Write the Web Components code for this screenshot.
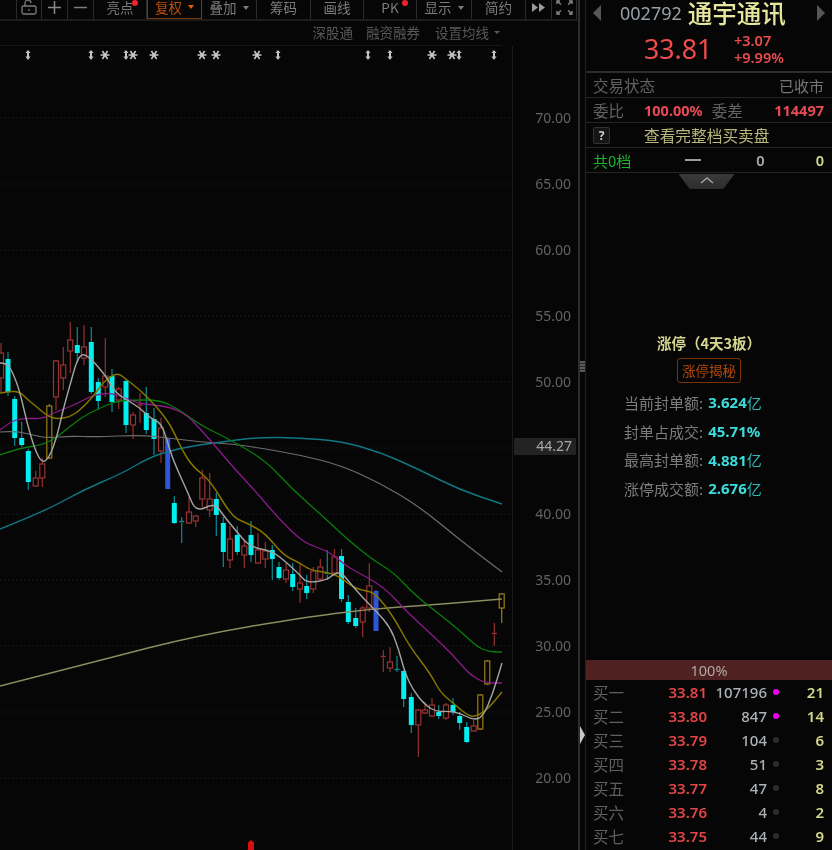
<!DOCTYPE html>
<html lang="zh">
<head>
<meta charset="utf-8">
<title>002792</title>
<style>
  html, body { margin: 0; height: 100%; background: #060606; overflow: hidden; }
  body { font-family: "Noto Sans", "Noto Sans CJK SC", sans-serif; }
</style>
</head>
<body>
<stock-app>
  <chart-pane slot="chart"></chart-pane>
  <quote-panel slot="panel"></quote-panel>
</stock-app>

<script>
const FONT = '"Noto Sans", "Noto Sans CJK SC", sans-serif';
const CJK = '"Noto Sans CJK SC", "Noto Sans", sans-serif';

// --- App Shell ---
class StockApp extends HTMLElement {
  constructor() {
    super();
    this.attachShadow({ mode: 'open' }).innerHTML = `
      <style>
        :host { display: flex; width: 832px; height: 850px; overflow: hidden; background: #060606; filter: blur(.3px); }
        .split { width: 8px; flex: none; box-sizing: border-box; border-left: 2px solid #2e2e2e; border-right: 1px solid #222;
                 display: flex; flex-direction: column; align-items: center; }
        .grip { width: 5px; height: 11px; margin-top: 361px; background: repeating-linear-gradient(#5a5a5a 0 2px, #2a2a2a 2px 3px); }
        .arrow { margin-top: 354px; width: 0; height: 0; border-left: 5px solid #c8c8c8; border-top: 9px solid transparent; border-bottom: 9px solid transparent; }
      </style>
      <slot name="chart"></slot>
      <div class="split"><div class="grip"></div><div class="arrow"></div></div>
      <slot name="panel"></slot>`;
  }
}

// --- Toolbar ---
class ToolBtn extends HTMLElement {
  constructor() {
    super();
    this.attachShadow({ mode: 'open' }).innerHTML = `
      <style>
        :host { display: flex; position: relative; align-items: center; justify-content: center; gap: 6px; box-sizing: border-box; height: 19px;
                padding-bottom: 5px; border-right: 1px solid #2c2c2c; color: #7c7c7c; font: 13.5px ${CJK}; white-space: nowrap; }
        :host([active]) { color: #b8500c; border: 1px solid #7a3a0c; border-top: 0; }
        .caret { display: none; width: 0; height: 0; border: 3px solid transparent; border-top: 4px solid currentColor; margin-top: 4px; }
        :host([menu]) .caret { display: block; }
        :host([active]) .caret { color: #e0600c; }
        .dot { display: none; position: absolute; right: 8px; top: 0; width: 6px; height: 6px; border-radius: 50%; background: #f0232e; }
        :host([dot]) .dot { display: block; }
      </style>
      <span><slot></slot></span><i class="caret"></i><i class="dot"></i>`;
  }
}

class ChartToolbar extends HTMLElement {
  constructor() {
    super();
    this.attachShadow({ mode: 'open' }).innerHTML = `
      <style>
        :host { display: grid; height: 21px; box-sizing: border-box; border-bottom: 2px solid #1c1c1c;
                grid-template-columns: 17px 25px 26px 26px 53px 55px 55px 54px 53px 53px 55px 54px 26px 25px; }
        .blank { border-right: 1px solid #2c2c2c; height: 19px; }
        svg { display: block; }
      </style>
      <div class="blank"></div>
      <tool-btn><svg width="18" height="15" viewBox="0 0 18 15" fill="none" stroke="#7c7c7c" stroke-width="1.3"><rect x="2" y="6" width="14" height="8" rx="1.5"/><path d="M5 6V3a3 3 0 0 1 6 0"/><path d="M9 9v2"/></svg></tool-btn>
      <tool-btn><svg width="13" height="13" viewBox="0 0 13 13" stroke="#8a8a8a" stroke-width="1.5"><path d="M0 6.5h13M6.5 0v13"/></svg></tool-btn>
      <tool-btn><svg width="13" height="13" viewBox="0 0 13 13" stroke="#7c7c7c" stroke-width="1.5"><path d="M0 6.5h13"/></svg></tool-btn>
      <tool-btn dot>亮点</tool-btn>
      <tool-btn active menu>复权</tool-btn>
      <tool-btn menu>叠加</tool-btn>
      <tool-btn>筹码</tool-btn>
      <tool-btn>画线</tool-btn>
      <tool-btn dot>PK</tool-btn>
      <tool-btn menu>显示</tool-btn>
      <tool-btn>简约</tool-btn>
      <tool-btn><svg width="13" height="9" viewBox="0 0 13 9" fill="#9a9a9a"><path d="M0 0l6 4.5L0 9zM7 0l6 4.5L7 9z"/></svg></tool-btn>
      <tool-btn><svg width="17" height="15" viewBox="0 0 17 15" fill="none" stroke="#8a8a8a" stroke-width="1.4"><path d="M1 4V1h3M16 4V1h-3M1 11v3h3M16 11v3h-3M2 2l3 2.5M15 2l-3 2.5M2 13l3-2.5M15 13l-3-2.5"/></svg></tool-btn>`;
  }
}

class ChartSubbar extends HTMLElement {
  constructor() {
    super();
    this.attachShadow({ mode: 'open' }).innerHTML = `
      <style>
        :host { display: flex; justify-content: flex-end; align-items: center; gap: 13px; box-sizing: border-box; width: 502px; height: 25px;
                padding: 0 2px 2px 0; border-bottom: 1px solid #161616; color: #585858; font: 13.5px ${CJK}; white-space: nowrap; }
        .sets { display: flex; align-items: center; gap: 5px; margin-left: 2px; }
        i { width: 0; height: 0; border: 3px solid transparent; border-top: 3px solid #585858; margin-top: 3px; }
      </style>
      <span>深股通</span><span>融资融券</span><span class="sets">设置均线<i></i></span>`;
  }
}

// --- K-line data: [x, bodyTop, bodyBottom, wickTop, wickBottom, kind] in page pixels ---
const CANDLES = [
  [1,353,378,343,392,'r'],[8,359,392,352,396,'c'],[14.7,399,438,396,446,'c'],[21.7,438,445,422,447,'c'],
  [28.3,451,482,449,490,'c'],[35.7,478,486,471,487,'r'],[42.3,464,478,458,487,'r'],[49.3,406,458,404,459,'g'],
  [56,361,397,360,410,'r'],[63.3,365,378,347,390,'r'],[70.3,340,351,322,373,'r'],[77.3,345,353,327,363,'c'],
  [84,347,358,325,365,'r'],[91.3,342,392,327,394,'c'],[98.3,382,401,378,410,'c'],[105.3,376,387,338,397,'r'],
  [112,376,402,369,412,'c'],[118.7,389,400,387,409,'r'],[126,381,425,379,433,'c'],[133,415,425,412,439,'r'],
  [140,405,406,393,423,'r'],[146.3,413,430,387,434,'c'],[154,419,439,408,455,'c'],[161,428,451,418,463,'r'],
  [167.7,439,489,438,489,'b'],[174.3,503,523,496,524,'c'],[181.7,521.5,522.5,517,543,'c'],[189,512,523,497,524,'r'],
  [195.7,516,521,515,527,'r'],[202.3,478,499,470,507,'r'],[209.7,499,510,473,517,'r'],[216.3,499,515,493,536,'c'],
  [223.3,523,552,517,567,'c'],[230,539,560,526,568,'r'],[237.3,535,552,526,555,'c'],[244.3,546,555,540,568,'r'],
  [251,535,555,521,562,'c'],[258,550,563,533,564,'r'],[265.3,551,559,542,568,'r'],[272.3,550,559,545,580,'c'],
  [279,567,578,562,580,'c'],[286,570,579,562,583,'r'],[292.7,574,587,563,591,'c'],[300,583,589,563,603,'r'],
  [306.7,586,593,575,599,'c'],[313.3,571,589,567,593,'r'],[320.3,567,579,559,581,'r'],[327.3,573.5,575,550,580,'c'],
  [334.5,557,573,549,575,'r'],[341.5,556,599,549,602,'c'],[348.3,602,622,595,624,'c'],[355.7,618,626,608,628,'c'],
  [362.7,608,622,606,637,'r'],[369.3,586,608,563,612,'r'],[376,591,631,590,631,'b'],[383.3,656.5,657.5,650,672,'r'],
  [390,662,668,647,672,'r'],[397,669.5,670.5,656,672,'c'],[403.7,671,699,670,707,'c'],[411.3,697,725,693,733,'c'],
  [418.3,710,725,709,757,'r'],[425,710,713,702,714,'r'],[432,705,716,698,717,'r'],[438.7,712,716,705,719,'c'],
  [446,705,718,703,720,'r'],[453,705,712,698,715,'c'],[459.7,716,723,712,730,'c'],[466.7,727,742,722,743,'c'],
  [473.7,726,731,720,732,'r'],[480.3,695,729,694,730,'g'],[487.3,661,684,660,685,'g'],[494.3,633.5,634.5,623,646,'r'],
  [501.7,594,608,593,623,'g']
];

const LINES = [
  { color: '#6e6e6e', width: 1.2, pts: [[0,432],[15,431],[33,435],[47,438],[70,436],[97,437],[140,435],[170,438],[200,442],[233,444],[260,448],[300,455],[340,465],[380,483],[420,507],[460,540],[502,572]] },
  { color: '#0f7785', width: 1.4, pts: [[0,529],[43,512],[83,490],[123,473],[150,457],[180,448],[213,443],[260,437],[300,438],[340,441],[380,452],[420,470],[460,490],[502,504]] },
  { color: '#8c8c60', width: 1.4, pts: [[0,686],[100,660],[200,635],[300,618],[370,609],[430,605],[502,599]] },
  { color: '#0a7d0a', width: 1.3, pts: [[0,455],[20,448],[43,445],[60,435],[80,418],[100,408],[117,401],[133,400],[160,400],[180,410],[200,425],[227,438],[265,460],[293,490],[327,520],[348,540],[373,560],[393,572],[413,593],[430,607],[457,628],[477,647],[490,652],[502,652]] },
  { color: '#8b1a8b', width: 1.3, pts: [[0,430],[10,422],[23,418],[42,419],[53,413],[67,408],[80,402],[93,395],[110,393],[123,397],[137,403],[153,405],[170,407],[187,415],[203,432],[217,448],[233,467],[257,493],[273,512],[293,533],[307,544],[330,552],[347,567],[367,577],[387,590],[407,612],[430,633],[453,655],[470,675],[485,683],[502,683]] },
  { color: '#857600', width: 1.5, pts: [[0,393],[10,391],[20,392],[28,400],[37,407],[47,416],[57,419],[70,417],[80,410],[93,397],[103,382],[117,372],[127,380],[140,390],[153,403],[165,417],[173,430],[182,450],[193,467],[210,480],[232,517],[247,523],[265,533],[283,555],[300,563],[310,570],[330,573],[340,577],[350,585],[360,590],[373,592],[385,605],[397,623],[410,647],[430,673],[440,692],[453,703],[467,715],[475,717],[487,710],[502,692]] },
  { color: '#a4a4a4', width: 1.4, pts: [[0,363],[7,363],[13,373],[20,392],[27,423],[35,450],[42,463],[49,458],[57,437],[63,410],[70,385],[77,360],[83,353],[92,360],[100,369],[107,378],[115,392],[127,400],[140,408],[150,418],[161,423],[167,440],[173,460],[188,493],[196,512],[215,503],[223,515],[237,532],[250,547],[272,551],[286,562],[300,575],[307,583],[327,580],[335,573],[342,573],[350,583],[363,598],[377,612],[390,627],[398,647],[405,673],[413,690],[425,705],[437,712],[447,711],[460,713],[473,720],[483,717],[493,693],[502,663]] }
];

const ARROWS = [28, 91, 126, 278, 368, 390, 459, 494];
const STARS = [105, 133, 154, 202, 216, 257, 432, 452];
const PRICES = ['70.00','65.00','60.00','55.00','50.00','45.00','40.00','35.00','30.00','25.00','20.00'];

// Midpoint smoothing, good enough for the moving averages
function smoothPath(pts) {
  let d = `M${pts[0][0]} ${pts[0][1]}`;
  for (let i = 1; i < pts.length - 1; i++) {
    const mx = (pts[i][0] + pts[i + 1][0]) / 2;
    const my = (pts[i][1] + pts[i + 1][1]) / 2;
    d += `Q${pts[i][0]} ${pts[i][1]} ${mx} ${my}`;
  }
  const last = pts[pts.length - 1];
  return d + `L${last[0]} ${last[1]}`;
}

function candleSvg([x, top, bottom, high, low, kind]) {
  const colors = {
    r: ['#9a3434', '#963030', 'none'],
    c: ['#00efef', '#0b8a96', '#00efef'],
    g: ['#9c7f12', '#9c7f12', 'none'],
    b: ['#2f55d8', '#2f55d8', '#2f55d8']
  }[kind];
  const wick = `<path d="M${x} ${high}V${top}M${x} ${bottom}V${low}" stroke="${colors[1]}" stroke-width="1.2"/>`;
  if (bottom - top < 2) return wick + `<path d="M${x - 2.5} ${top}H${x + 2.5}" stroke="${colors[1]}" stroke-width="1.4"/>`;
  return wick + `<rect x="${x - 2.5}" y="${top}" width="5" height="${bottom - top}" fill="${colors[2]}" stroke="${kind === 'c' || kind === 'b' ? 'none' : colors[0]}" stroke-width="1.2"/>`;
}

class KlineChart extends HTMLElement {
  constructor() {
    super();
    const grid = PRICES.map((p, i) => {
      const y = 118 + i * 66;
      return `<path d="M0 ${y}H512" stroke="#242424" stroke-dasharray="1 3"/>
        <text x="571" y="${y + 5}" text-anchor="end" fill="#636363" font-size="14">${p}</text>`;
    }).join('');
    const marks = ARROWS.map(x => `<path d="M${x} 50l2.6 3h-1.6v3.6h1.6L${x} 60l-2.6-3.4h1.6V53h-1.6z" fill="#c4c4c4"/>`).join('')
      + STARS.map(x => `<g stroke="#c8c8c8" stroke-width="1.6"><path d="M${x - 4.5} 55h9M${x - 2.6} 51l5.2 8M${x + 2.6} 51l-5.2 8"/></g>`).join('');
    this.attachShadow({ mode: 'open' }).innerHTML = `
      <style>
        :host { display: block; width: 578px; height: 804px; font-family: ${FONT}; }
        svg { display: block; }
      </style>
      <svg width="578" height="804" viewBox="0 46 578 804">
        <path d="M512.5 46V850" stroke="#1a1a1a"/>
        ${grid}
        ${marks}
        ${CANDLES.map(candleSvg).join('')}
        ${LINES.map(l => `<path d="${smoothPath(l.pts)}" fill="none" stroke="${l.color}" stroke-width="${l.width}"/>`).join('')}
        <rect x="514" y="438" width="62" height="17" rx="1" fill="#232323"/>
        <text x="572" y="451" text-anchor="end" fill="#a8a8a8" font-size="14">44.27</text>
        <path d="M251 840l3 2.5v7.5h-6v-7.5z" fill="#d80f0f"/>
      </svg>`;
  }
}

class ChartPane extends HTMLElement {
  constructor() {
    super();
    this.attachShadow({ mode: 'open' }).innerHTML = `
      <style>:host { display: block; width: 578px; flex: none; height: 850px; overflow: hidden; }</style>
      <chart-toolbar></chart-toolbar>
      <chart-subbar></chart-subbar>
      <kline-chart></kline-chart>`;
  }
}

// --- Right Panel ---
class QuoteRow extends HTMLElement {
  constructor() {
    super();
    this.attachShadow({ mode: 'open' }).innerHTML = `
      <style>
        :host { display: flex; align-items: center; box-sizing: border-box; height: 25px; padding: 0 8px 0 7px;
                border-bottom: 1px solid #242424; white-space: nowrap; }
      </style>
      <slot></slot>`;
  }
}

class QuoteHead extends HTMLElement {
  constructor() {
    super();
    this.attachShadow({ mode: 'open' }).innerHTML = `
      <style>
        :host { display: block; box-sizing: border-box; height: 73px; border-bottom: 2px solid #2c2c2c; font-family: ${FONT}; white-space: nowrap; }
        .title { display: flex; align-items: center; height: 25px; padding: 0 7px 0 7px; }
        .tri { width: 0; height: 0; border-top: 8px solid transparent; border-bottom: 8px solid transparent; }
        .left { border-right: 8px solid #575757; }
        .right { border-left: 8px solid #575757; margin-left: auto; }
        .code { margin-left: 19px; font-size: 18px; color: #98a0a8; }
        .name { margin-left: 6px; font: 500 24.5px ${CJK}; color: #e6e69c; }
        .px { display: flex; align-items: center; padding: 4px 0 0 58px; color: #f04c4c; }
        .last { font-size: 26.7px; line-height: 40px; width: 90px; }
        .chg { font-size: 14.5px; font-weight: 600; line-height: 17px; color: #e84c4c; }
      </style>
      <div class="title"><i class="tri left"></i><span class="code">002792</span><span class="name">通宇通讯</span><i class="tri right"></i></div>
      <div class="px"><span class="last">33.81</span><div class="chg">+3.07<br>+9.99%</div></div>`;
  }
}

class LimitInfo extends HTMLElement {
  constructor() {
    super();
    const rows = [['当前封单额:', '3.624', '亿'], ['封单占成交:', '45.71%', ''], ['最高封单额:', '4.881', '亿'], ['涨停成交额:', '2.676', '亿']];
    this.attachShadow({ mode: 'open' }).innerHTML = `
      <style>
        :host { display: flex; flex-direction: column; align-items: center; font-family: ${CJK}; white-space: nowrap; }
        .ttl { font-size: 14.5px; font-weight: 700; line-height: 20px; color: #d6d68e; }
        .btn { margin-top: 5px; box-sizing: border-box; width: 64px; height: 25px; line-height: 23px; text-align: center; border: 1px solid #7c3205;
               border-radius: 3px; color: #b44a08; font-size: 13.5px; }
        .rows { margin-top: 5px; display: flex; flex-direction: column; align-self: flex-start; padding-left: 38px; }
        .row { display: flex; align-items: center; height: 28.7px; font-size: 15px; color: #7c7c7c; }
        b { margin-left: 5px; font: 700 15px ${FONT}; color: #3ddcdc; }
        em { font-style: normal; color: #2fb8b8; }
      </style>
      <div class="ttl">涨停（4天3板）</div>
      <div class="btn">涨停揭秘</div>
      <div class="rows">${rows.map(r => `<div class="row">${r[0]}<b>${r[1]}</b><em>${r[2]}</em></div>`).join('')}</div>`;
  }
}

class BidBook extends HTMLElement {
  constructor() {
    super();
    const bids = [['买一','33.81','107196',1,'21'],['买二','33.80','847',1,'14'],['买三','33.79','104',0,'6'],['买四','33.78','51',0,'3'],
                  ['买五','33.77','47',0,'8'],['买六','33.76','4',0,'2'],['买七','33.75','44',0,'9']];
    this.attachShadow({ mode: 'open' }).innerHTML = `
      <style>
        :host { display: block; font-family: ${FONT}; white-space: nowrap; }
        .bar { height: 20px; line-height: 20px; text-align: center; background: #4f2121; color: #b4a8a8; font-size: 14.5px; }
        .row { display: grid; grid-template-columns: 68px 46px 60px 18px 1fr; align-items: center; height: 24px; padding: 0 8px 0 7px; }
        .lb { font: 15.5px ${CJK}; color: #5f5f5f; }
        .pr { text-align: right; font-size: 15px; font-weight: 600; color: #e04646; }
        .vol { text-align: right; font-size: 15px; font-weight: 500; color: #aeb2b6; }
        .dot { justify-self: center; width: 6px; height: 6px; border-radius: 50%; background: #2c2c2c; }
        .dot.hot { background: #f000f0; }
        .cnt { text-align: right; font-size: 15px; font-weight: 600; color: #d4d88c; }
      </style>
      <div class="bar">100%</div>
      ${bids.map(b => `<div class="row"><span class="lb">${b[0]}</span><span class="pr">${b[1]}</span><span class="vol">${b[2]}</span><i class="dot${b[3] ? ' hot' : ''}"></i><span class="cnt">${b[4]}</span></div>`).join('')}`;
  }
}

class QuotePanel extends HTMLElement {
  constructor() {
    super();
    this.attachShadow({ mode: 'open' }).innerHTML = `
      <style>
        :host { display: flex; flex-direction: column; width: 246px; flex: none; height: 850px; overflow: hidden; font: 15px ${CJK}; color: #6a6a6a; }
        .end { margin-left: auto; }
        .lb { color: #626262; font-size: 15.5px; }
        .red { font: 700 14.5px ${FONT}; color: #e84a56; }
        .help { width: 17px; height: 17px; box-sizing: border-box; border: 1px solid #333; border-radius: 2px; background: #151515; color: #d0d0d0;
                font: 700 12px/15px ${FONT}; text-align: center; }
        .more { margin-left: 34px; color: #b8b87c; font-size: 15.7px; }
        .count { color: #19b32f; font-size: 15px; }
        .dash { margin-left: 54px; width: 16px; height: 2px; background: #9a9a9a; }
        .zero { font: 600 14.5px ${FONT}; }
        .tab { align-self: center; margin: 1px 0 0 -5px; width: 56px; height: 15px; background: linear-gradient(#3a3a3a, #2c2c2c);
               clip-path: polygon(0 0, 100% 0, 80% 100%, 20% 100%); display: flex; justify-content: center; }
        limit-info { margin-top: 144px; }
        bid-book { margin-top: auto; height: 190px; overflow: hidden; }
      </style>
      <quote-head></quote-head>
      <quote-row><span class="lb">交易状态</span><span class="end" style="color:#767676">已收市</span></quote-row>
      <quote-row><span class="lb">委比</span><span class="red" style="margin-left:20px">100.00%</span><span class="lb" style="margin-left:9px">委差</span><span class="red end">114497</span></quote-row>
      <quote-row><span class="help">?</span><span class="more">查看完整档买卖盘</span></quote-row>
      <quote-row><span class="count">共0档</span><i class="dash"></i><span class="zero" style="margin-left:55px;color:#a8acb0">0</span><span class="zero end" style="color:#d4d88c">0</span></quote-row>
      <div class="tab"><svg width="18" height="11" viewBox="0 0 18 11" fill="none" stroke="#a0a0a0" stroke-width="1.6"><path d="M3 9l6-5 6 5"/></svg></div>
      <limit-info></limit-info>
      <bid-book></bid-book>`;
  }
}

customElements.define('tool-btn', ToolBtn);
customElements.define('chart-toolbar', ChartToolbar);
customElements.define('chart-subbar', ChartSubbar);
customElements.define('kline-chart', KlineChart);
customElements.define('chart-pane', ChartPane);
customElements.define('quote-row', QuoteRow);
customElements.define('quote-head', QuoteHead);
customElements.define('limit-info', LimitInfo);
customElements.define('bid-book', BidBook);
customElements.define('quote-panel', QuotePanel);
customElements.define('stock-app', StockApp);
</script>
</body>
</html>
